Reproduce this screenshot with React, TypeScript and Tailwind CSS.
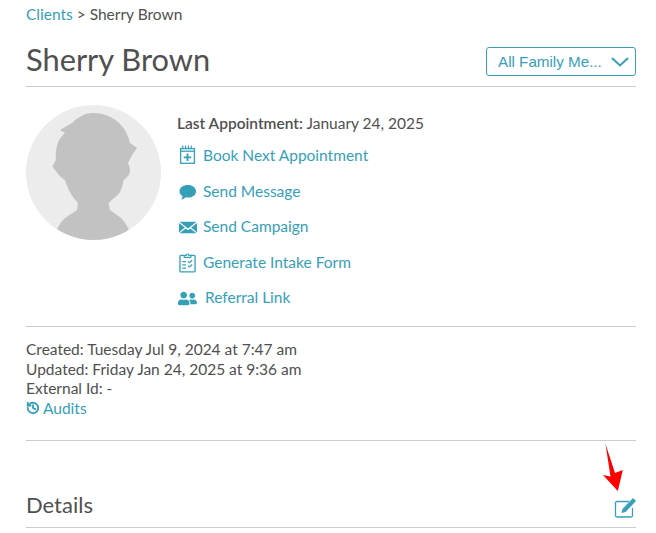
import { FaUserFriends } from 'react-icons/fa';
import { History } from 'lucide-react';

const links = [
  { label: 'Book Next Appointment', icon: <CalendarIcon />, height: 'h-[36px]', gap: 'ml-[4px]' },
  { label: 'Send Message', icon: <BubbleIcon />, height: 'h-[35px]', gap: 'ml-[4px]' },
  { label: 'Send Campaign', icon: <MailIcon />, height: 'h-[36px]', gap: 'ml-[4px]' },
  { label: 'Generate Intake Form', icon: <ClipboardIcon />, height: 'h-[35px]', gap: 'ml-[4px]' },
  { label: 'Referral Link', icon: <FaUserFriends className="w-[19px] h-[19px] text-[#36a0b9]" />, height: 'h-[36px]', gap: 'ml-[6px]' },
];

function CalendarIcon() {
  return (
    <svg viewBox="0 0 18 20" className="-mt-[3px] w-[17px] h-[19px] text-[#36a0b9]" fill="none" stroke="currentColor">
      <rect x="1.700" y="3.700" width="14.600" height="15.600" strokeWidth="1.400" />
      <path d="M1.700 6.500h14.600" strokeWidth="1.400" />
      <path d="M4 0.500v4M7 0.500v4M10 0.500v4M13 0.500v4" strokeWidth="1.200" />
      <path d="M9 9v8M5 13h8" strokeWidth="2" />
    </svg>
  );
}

function BubbleIcon() {
  return (
    <svg viewBox="0 0 20 18" className="mt-[1px] w-[19px] h-[17px] text-[#36a0b9]" fill="currentColor">
      <path d="M10.500 1C5.300 1 1.500 3.800 1.500 7.600c0 2.200 1.200 4 3.200 5.200-.1 1.500-.7 2.800-1.400 3.700 1.900-.2 3.600-1.100 4.800-2.400.9.2 1.700.3 2.600.3 4.700 0 8.300-2.900 8.300-6.800S15.200 1 10.500 1z" />
    </svg>
  );
}

function MailIcon() {
  return (
    <svg viewBox="0 0 20 14" className="w-[18px] h-[13px] text-[#36a0b9]" fill="currentColor">
      <path d="M0.500 0.500h19L10 8z" />
      <path d="M0 2l6.500 5L0 12.500zM20 2l-6.500 5L20 12.500z" />
      <path d="M7.500 8L10 10l2.500-2 7 5.500H0.500z" />
    </svg>
  );
}

function ClipboardIcon() {
  return (
    <svg viewBox="0 0 18 22" className="w-[17px] h-[21px] text-[#36a0b9]" fill="none" stroke="currentColor">
      <path d="M5.500 3.500H2a1 1 0 0 0-1 1v15.500a1 1 0 0 0 1 1h14a1 1 0 0 0 1-1V4.500a1 1 0 0 0-1-1h-3.500" strokeWidth="1.400" />
      <path d="M5.500 5.500V3.500h2a1.500 1.500 0 0 1 3 0h2v2z" strokeWidth="1.300" />
      <path d="M3.500 10h4M3.500 13.500h4M3.500 17h4" strokeWidth="1.400" />
      <path d="M9.500 9.800l1.500 1.400 3-2.600M9.500 14.300l1.500 1.400 3-2.600" strokeWidth="1.400" />
    </svg>
  );
}

function EditIcon() {
  return (
    <svg viewBox="0 0 22.500 21" className="w-[22.500px] h-[21px] text-[#36a0b9]">
      <path d="M15 4.500H3a1.500 1.500 0 0 0-1.500 1.500v12.500A1.500 1.500 0 0 0 3 20h14a1.500 1.500 0 0 0 1.500-1.500V11" fill="none" stroke="currentColor" strokeWidth="1.300" />
      <path d="M7.500 16l1-4L19 1l3 3L11.500 15z" fill="currentColor" />
    </svg>
  );
}

function Silhouette() {
  return (
    <svg viewBox="0 0 135 135" className="w-[135px] h-[135px]">
      <path
        fill="#c2c2c2"
        d="M67 8C58 8 51 13 46 18L34 25L39 28C33 33 30.500 40 30 47C29.500 51 30 54 29.700 55L26.500 61.500C29 65 31 68 33 70C35 72 37 74 39 75C40.500 80 42 84 44 87C46 91 49 95 52 98L51 105L39 113C35 117 33 120 31 124L31 135H103L102.500 124C100 119 98 116 95 113L84 105L82.500 98C87 94 92 90 94 87C96 83 97 79 97.500 75C101 73 104 69 104 66C104 62 103 60 102 58L106 50L111 43L104 38C102 30 99 24 95 20C88 12 78 8 67 8Z"
      />
    </svg>
  );
}

export default function App() {
  return (
    <div className="relative w-[656px] h-[533px] overflow-hidden bg-white pl-[26px] pr-[20px] font-['Lato',sans-serif] text-[15.500px] text-[#505050]">
      <div className="h-[30px] pt-[4px] leading-[20px]">
        <span className="text-[#36a0b9]">Clients</span> &gt; Sherry Brown
      </div>

      <div className="flex h-[57px] items-center justify-between border-b border-[#cccccc] pt-[7px]">
        <h1 className="mb-[3px] text-[30.800px] leading-[40px] font-normal">Sherry Brown</h1>
        <div className="flex h-[29px] w-[150px] items-center justify-between rounded-[3px] border border-[#36a0b9] pl-[11px] pr-[6px] font-['Liberation_Sans',sans-serif] text-[15.200px] text-[#36a0b9]">
          <span className="mt-[1px]">All Family Me...</span>
          <svg viewBox="0 0 18 10" className="w-[18px] h-[10px]" fill="none" stroke="currentColor" strokeWidth="2">
            <path d="M1 1l8 7.500L17 1" />
          </svg>
        </div>
      </div>

      <div className="flex h-[240px] border-b border-[#cccccc] pt-[18px]">
        <div className="h-[135px] w-[135px] shrink-0 overflow-hidden rounded-full bg-[#ececec]">
          <Silhouette />
        </div>
        <div className="ml-[15px]">
          <div className="h-[33px] pt-[8px] pl-[1px] leading-[20px]">
            <span className="font-semibold">Last Appointment:</span> January 24, 2025
          </div>
          {links.map((link) => (
            <div key={link.label} className={`flex items-center ${link.height} text-[#36a0b9]`}>
              <span className="flex w-[23px] justify-center">{link.icon}</span>
              <span className={link.gap}>{link.label}</span>
            </div>
          ))}
        </div>
      </div>

      <div className="h-[114px] border-b border-[#cccccc] pt-[13px] leading-[19.500px]">
        <div>Created: Tuesday Jul 9, 2024 at 7:47 am</div>
        <div>Updated: Friday Jan 24, 2025 at 9:36 am</div>
        <div>External Id: -</div>
        <div className="flex items-center text-[#36a0b9]">
          <History className="mr-[3px] h-[14px] w-[14px]" strokeWidth={3.200} />
          Audits
        </div>
      </div>

      <div className="flex h-[87px] items-end justify-between border-b border-[#cccccc] pb-[9px]">
        <h2 className="-mb-[1px] text-[22px] leading-[28px] font-normal">Details</h2>
        <EditIcon />
      </div>

      <svg viewBox="0 0 656 533" className="pointer-events-none absolute inset-0 h-[533px] w-[656px]">
        <path fill="#ff0000" d="M605.500 444L615 473L622.800 470L617.800 491L603 475L610.500 476.500Z" />
      </svg>
    </div>
  );
}
